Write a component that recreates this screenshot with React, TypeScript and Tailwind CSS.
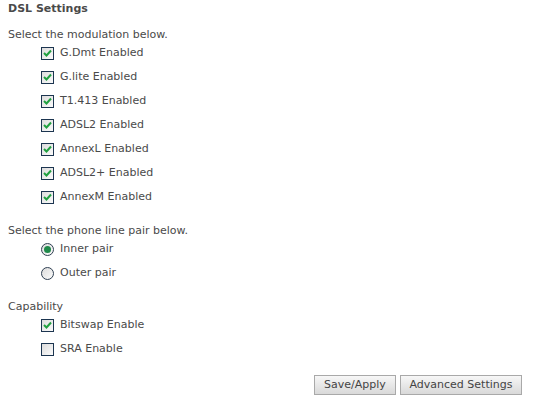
import React from 'react';

const Check = ({ checked }: { checked: boolean }) => (
  <span className="inline-flex w-[13px] h-[13px] border border-[#1c3550] bg-gradient-to-br from-[#dcdcdc] to-[#fbfbfb] items-center justify-center shrink-0">
    {checked && (
      <svg width="9" height="8" viewBox="0 0 9 8">
        <path d="M1 4 L3.5 6.5 L8 1.5" stroke="#21a040" strokeWidth="2" fill="none" />
      </svg>
    )}
  </span>
);

const Radio = ({ checked }: { checked: boolean }) => (
  <span className="inline-flex w-[13px] h-[13px] rounded-full border border-[#2f3f52] bg-gradient-to-br from-[#dcdcdc] to-[#fbfbfb] items-center justify-center shrink-0">
    {checked && <span className="w-[7px] h-[7px] rounded-full bg-[#1f8a4a]" />}
  </span>
);

const Row = ({ label, children }: { label: string; children: React.ReactNode }) => (
  <div className="flex items-center gap-[6px] h-[24px] pl-[33px]">
    {children}
    <span>{label}</span>
  </div>
);

const modulations = [
  'G.Dmt Enabled',
  'G.lite Enabled',
  'T1.413 Enabled',
  'ADSL2 Enabled',
  'AnnexL Enabled',
  'ADSL2+ Enabled',
  'AnnexM Enabled',
];

export default function App() {
  return (
    <div className="w-[546px] h-[414px] bg-white text-[#4a4a4a] text-[11px] leading-[14px] font-['DejaVu_Sans',sans-serif] px-[8px] pt-[2px]">
      <div className="font-bold h-[14px]">DSL Settings</div>
      <div className="mt-[12px]">Select the modulation below.</div>
      <div className="-mt-[1px]">
        {modulations.map((m) => (
          <Row key={m} label={m}>
            <Check checked />
          </Row>
        ))}
      </div>
      <div className="mt-[15px]">Select the phone line pair below.</div>
      <div className="-mt-[1px]">
        <Row label="Inner pair">
          <Radio checked />
        </Row>
        <Row label="Outer pair">
          <Radio checked={false} />
        </Row>
      </div>
      <div className="mt-[15px]">Capability</div>
      <div className="-mt-[1px]">
        <Row label="Bitswap Enable">
          <Check checked />
        </Row>
        <Row label="SRA Enable">
          <Check checked={false} />
        </Row>
      </div>
      <div className="flex justify-end gap-[4px] mt-[14px] pr-[16px]">
        <button className="h-[20px] w-[82px] border border-[#a9a9a9] bg-gradient-to-b from-[#f7f7f7] to-[#d9d9d9] text-[#444]">Save/Apply</button>
        <button className="h-[20px] w-[122px] border border-[#a9a9a9] bg-gradient-to-b from-[#f7f7f7] to-[#d9d9d9] text-[#444]">Advanced Settings</button>
      </div>
    </div>
  );
}
